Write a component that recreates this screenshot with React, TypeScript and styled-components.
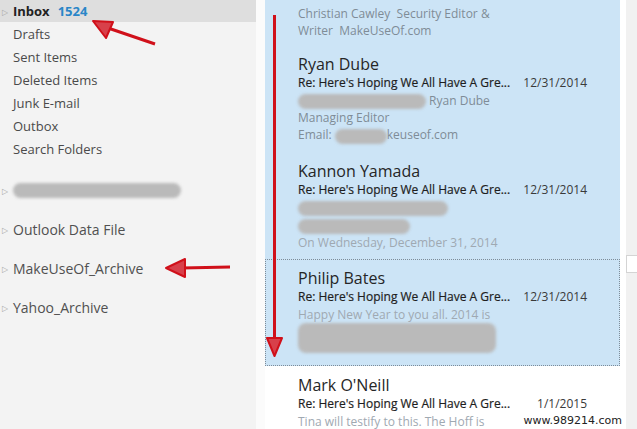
import React from "react";
import styled, { createGlobalStyle } from "styled-components";

const GlobalStyle = createGlobalStyle`
  html, body {
    margin: 0;
    padding: 0;
    background: #ffffff;
  }
  body {
    font-family: "Open Sans", "Liberation Sans", sans-serif;
    overflow: hidden;
  }
`;

const Window = styled.div`
  position: relative;
  width: 637px;
  height: 429px;
  overflow: hidden;
  display: grid;
  grid-template-columns: 256px 9px 355px 6px 11px;
  background: #ffffff;
`;

const FolderPane = styled.nav`
  background: #f3f3f3;
  display: flex;
  flex-direction: column;
`;

const Gutter = styled.div`
  background: #fbfbfb;
`;

const FolderRow = styled.div<{ $active?: boolean }>`
  height: 22px;
  margin-bottom: 1px;
  display: flex;
  align-items: center;
  padding-left: 13px;
  font-size: 13px;
  color: #4a4a4a;
  background: ${(p) => (p.$active ? "#dedede" : "transparent")};
  position: relative;
`;

const AccountRow = styled.div`
  height: 39px;
  display: flex;
  align-items: center;
  padding-left: 13px;
  font-size: 14px;
  color: #505050;
  position: relative;
`;

const Twisty = styled.span`
  position: absolute;
  left: 2px;
  font-size: 8px;
  color: #a8a8a8;
`;

const FolderName = styled.span<{ $bold?: boolean }>`
  font-weight: ${(p) => (p.$bold ? 700 : 400)};
  color: ${(p) => (p.$bold ? "#222" : "inherit")};
`;

const Count = styled.span`
  margin-left: 8px;
  font-weight: 700;
  color: #2a86c8;
`;

const Spacer = styled.div<{ $h: number }>`
  height: ${(p) => p.$h}px;
`;

const Smudge = styled.span<{ $w: number; $h?: number }>`
  display: inline-block;
  width: ${(p) => p.$w}px;
  height: ${(p) => p.$h ?? 14}px;
  border-radius: 8px;
  background: #bababa;
  filter: blur(1.5px);
  vertical-align: middle;
`;

const MessageList = styled.section`
  display: flex;
  flex-direction: column;
`;

const Item = styled.div<{ $selected?: boolean; $focused?: boolean; $h?: number }>`
  box-sizing: border-box;
  height: ${(p) => p.$h ?? 107}px;
  flex-shrink: 0;
  padding: 8px 30px 0 32px;
  background: ${(p) => (p.$selected ? "#cce4f6" : "#ffffff")};
  border: 1px dotted ${(p) => (p.$focused ? "#7d8c99" : "transparent")};
`;

const PartialItem = styled(Item)`
  padding-top: 4px;
`;

const Sender = styled.div`
  font-size: 16px;
  line-height: 20px;
  color: #262626;
`;

const SubjectRow = styled.div`
  display: flex;
  justify-content: space-between;
  font-size: 12px;
  line-height: 18px;
`;

const Subject = styled.span`
  color: #1e1e1e;
  -webkit-text-stroke: 0.2px #1e1e1e;
`;

const DateText = styled.span`
  color: #3a3a3a;
  padding-right: 2px;
`;

const Preview = styled.div<{ $muted?: boolean }>`
  font-size: 12px;
  line-height: 17px;
  color: ${(p) => (p.$muted ? "#9fa9b2" : "#7f8c97")};
  white-space: nowrap;
`;

const ScrollGap = styled.div`
  background: #ffffff;
`;

const ScrollBar = styled.div`
  background: #f1f1f1;
  display: flex;
  flex-direction: column;
  justify-content: space-between;
  padding-top: 255px;
  padding-bottom: 4px;
`;

const ScrollBox = styled.div`
  height: 16px;
  background: #ffffff;
  border: 1px solid #d4d4d4;
  border-right: none;
`;

const ScrollArrow = styled.div`
  margin-left: 3px;
  width: 0;
  height: 0;
  border-left: 3px solid transparent;
  border-right: 3px solid transparent;
  border-top: 3px solid #777;
`;

const Annotations = styled.svg`
  position: absolute;
  left: 0;
  top: 0;
  pointer-events: none;
`;

const Watermark = styled.div`
  position: absolute;
  right: 15px;
  bottom: 2px;
  font-family: "DejaVu Sans", "Liberation Sans", sans-serif;
  font-size: 11px;
  color: #222;
  background: rgba(255, 255, 255, 0.6);
`;

const folders = ["Drafts", "Sent Items", "Deleted Items", "Junk E-mail", "Outbox", "Search Folders"];

export default function App() {
  return (
    <>
      <GlobalStyle />
      <Window>
        <FolderPane>
          <FolderRow $active>
            <Twisty>▷</Twisty>
            <FolderName $bold>Inbox</FolderName>
            <Count>1524</Count>
          </FolderRow>
          {folders.map((f) => (
            <FolderRow key={f}>
              <FolderName>{f}</FolderName>
            </FolderRow>
          ))}
          <Spacer $h={10} />
          <AccountRow>
            <Twisty>▷</Twisty>
            <Smudge $w={168} $h={15} />
          </AccountRow>
          <AccountRow>
            <Twisty>▷</Twisty>
            Outlook Data File
          </AccountRow>
          <AccountRow>
            <Twisty>▷</Twisty>
            MakeUseOf_Archive
          </AccountRow>
          <AccountRow>
            <Twisty>▷</Twisty>
            Yahoo_Archive
          </AccountRow>
        </FolderPane>
        <Gutter />
        <MessageList>
          <PartialItem $selected $h={45}>
            <Preview>Christian Cawley&nbsp; Security Editor &amp;</Preview>
            <Preview>Writer&nbsp; MakeUseOf.com</Preview>
          </PartialItem>
          <Item $selected>
            <Sender>Ryan Dube</Sender>
            <SubjectRow>
              <Subject>Re: Here's Hoping We All Have A Gre...</Subject>
              <DateText>12/31/2014</DateText>
            </SubjectRow>
            <Preview>
              <Smudge $w={128} $h={15} /> Ryan Dube
            </Preview>
            <Preview>Managing Editor</Preview>
            <Preview>
              Email: <Smudge $w={52} $h={15} />keuseof.com
            </Preview>
          </Item>
          <Item $selected>
            <Sender>Kannon Yamada</Sender>
            <SubjectRow>
              <Subject>Re: Here's Hoping We All Have A Gre...</Subject>
              <DateText>12/31/2014</DateText>
            </SubjectRow>
            <Preview>
              <Smudge $w={150} $h={15} />
            </Preview>
            <Preview>
              <Smudge $w={112} $h={15} />
            </Preview>
            <Preview $muted>On Wednesday, December 31, 2014</Preview>
          </Item>
          <Item $selected $focused>
            <Sender>Philip Bates</Sender>
            <SubjectRow>
              <Subject>Re: Here's Hoping We All Have A Gre...</Subject>
              <DateText>12/31/2014</DateText>
            </SubjectRow>
            <Preview $muted>Happy New Year to you all. 2014 is</Preview>
            <Preview>
              <Smudge $w={198} $h={30} />
            </Preview>
          </Item>
          <Item>
            <Sender>Mark O'Neill</Sender>
            <SubjectRow>
              <Subject>Re: Here's Hoping We All Have A Gre...</Subject>
              <DateText>1/1/2015</DateText>
            </SubjectRow>
            <Preview $muted>Tina will testify to this. The Hoff is</Preview>
          </Item>
        </MessageList>
        <ScrollGap />
        <ScrollBar>
          <ScrollBox />
          <ScrollArrow />
        </ScrollBar>

        <Annotations width="637" height="429" viewBox="0 0 637 429">
          <g stroke="#d0101a" fill="#e0202a" strokeLinejoin="round">
            <line x1="274.5" y1="15" x2="274.5" y2="340" strokeWidth="3" />
            <polygon points="267,338 282,338 274.5,356" strokeWidth="2" fill="#d8404a" />
            <line x1="155" y1="44" x2="108" y2="28" strokeWidth="3" />
            <polygon points="93,21 113,22 106,38" strokeWidth="2" fill="#d8404a" />
            <line x1="230" y1="267" x2="182" y2="268" strokeWidth="3" />
            <polygon points="166,268 185,259 185,277" strokeWidth="2" fill="#d8404a" />
          </g>
        </Annotations>
        <Watermark>www.989214.com</Watermark>
      </Window>
    </>
  );
}
